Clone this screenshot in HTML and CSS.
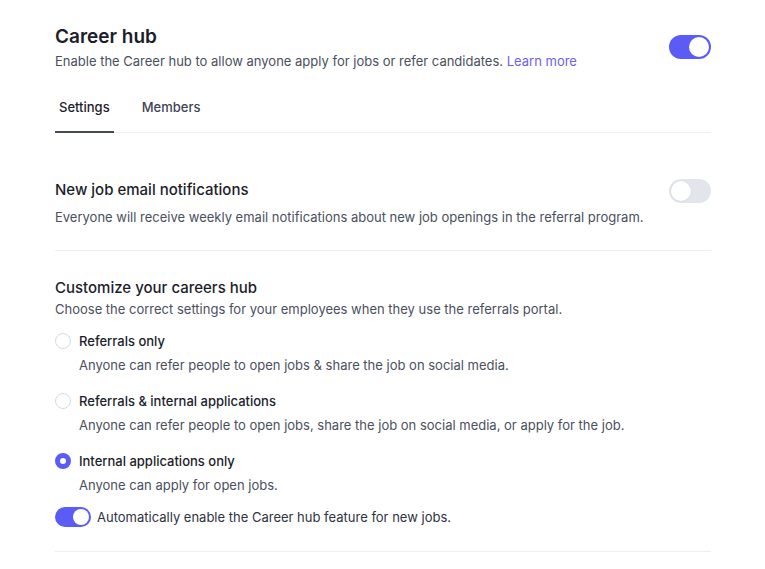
FILE: index.html
```html
<!DOCTYPE html>
<html>
<head>
<meta charset="utf-8">
<link rel="stylesheet" href="styles.css">
</head>
<body>
<div class="page">
  <div class="header">
    <div class="header-text">
      <h1 class="title">Career hub</h1>
      <p class="subtitle">Enable the Career hub to allow anyone apply for jobs or refer candidates. <a class="link" href="#">Learn more</a></p>
    </div>
    <span class="toggle on"><span class="knob"></span></span>
  </div>
  <div class="tabs">
    <span class="tab active">Settings</span>
    <span class="tab">Members</span>
  </div>
  <div class="section section-notify">
    <div class="row">
      <div>
        <h2 class="sec-title">New job email notifications</h2>
        <p class="desc">Everyone will receive weekly email notifications about new job openings in the referral program.</p>
      </div>
      <span class="toggle off"><span class="knob"></span></span>
    </div>
  </div>
  <div class="section section-custom">
    <h2 class="sec-title">Customize your careers hub</h2>
    <p class="desc">Choose the correct settings for your employees when they use the referrals portal.</p>
    <div class="options">
      <div class="option">
        <div class="opt-label"><span class="radio"></span>Referrals only</div>
        <p class="desc opt-desc">Anyone can refer people to open jobs &amp; share the job on social media.</p>
      </div>
      <div class="option">
        <div class="opt-label"><span class="radio"></span>Referrals &amp; internal applications</div>
        <p class="desc opt-desc">Anyone can refer people to open jobs, share the job on social media, or apply for the job.</p>
      </div>
      <div class="option">
        <div class="opt-label"><span class="radio checked"></span>Internal applications only</div>
        <p class="desc opt-desc">Anyone can apply for open jobs.</p>
      </div>
    </div>
    <div class="auto-row">
      <span class="toggle small on"><span class="knob"></span></span>
      <span class="auto-label">Automatically enable the Career hub feature for new jobs.</span>
    </div>
  </div>
</div>
</body>
</html>
```

FILE: styles.css
```css
* { box-sizing: border-box; }
html, body { margin: 0; padding: 0; background: #ffffff; }
body {
  font-family: Inter, "Noto Sans", sans-serif;
  color: #1e2030;
}
.page {
  width: 656px;
  margin-left: 55px;
}
.header {
  display: flex;
  justify-content: space-between;
  align-items: flex-start;
  padding-top: 23px;
}
.title {
  margin: 0;
  font-size: 19px;
  line-height: 28px;
  font-weight: 600;
  color: #1b1d2b;
}
.subtitle {
  margin: 0;
  font-size: 13px;
  line-height: 20px;
  color: #4a4f5e;
}
.link {
  color: #6e5ff2;
  text-decoration: none;
}
.header .toggle { margin-top: 12px; }
.toggle {
  flex: none;
  display: inline-flex;
  align-items: center;
  width: 42px;
  height: 24px;
  border-radius: 12px;
  padding: 2px;
}
.toggle .knob {
  width: 20px;
  height: 20px;
  border-radius: 50%;
  background: #ffffff;
}
.toggle.on { background: #5b5bf5; justify-content: flex-end; }
.toggle.off { background: #e2e5eb; justify-content: flex-start; }
.toggle.off .knob { box-shadow: 0 0 0 0.5px #d5d9e0; }
.toggle.small { width: 36px; height: 20px; border-radius: 10px; }
.toggle.small .knob { width: 16px; height: 16px; }
.tabs {
  display: flex;
  gap: 24px;
  margin-top: 26px;
  border-bottom: 1px solid #eceef2;
}
.tab {
  font-size: 13px;
  line-height: 20px;
  font-weight: 500;
  color: #3f4354;
  padding: 0 4px 14px;
  margin-bottom: -1px;
  border-bottom: 2px solid transparent;
}
.tab.active {
  color: #1b1d2b;
  border-bottom-color: #444857;
}
.section {
  border-bottom: 1px solid #eceef2;
  padding-bottom: 24px;
}
.section-notify { padding-top: 46px; padding-bottom: 23px; }
.section-custom { padding-top: 26px; }
.row {
  display: flex;
  justify-content: space-between;
  align-items: flex-start;
}
.sec-title {
  margin: 0 0 6px;
  font-size: 15px;
  line-height: 22px;
  font-weight: 500;
  color: #1b1d2b;
}
.section-custom > .sec-title { margin-bottom: 0; }
.desc {
  margin: 0;
  font-size: 13px;
  line-height: 20px;
  color: #4a4f5e;
}
.options {
  display: flex;
  flex-direction: column;
  gap: 16px;
  margin-top: 12px;
}
.opt-label {
  display: flex;
  align-items: center;
  gap: 8px;
  font-size: 13px;
  line-height: 20px;
  font-weight: 500;
  color: #1b1d2b;
}
.radio {
  flex: none;
  width: 16px;
  height: 16px;
  border-radius: 50%;
  border: 1px solid #d7dbe2;
  background: #ffffff;
}
.radio.checked {
  border: 5px solid #5b5bf5;
}
.opt-desc {
  margin-top: 4px;
  padding-left: 24px;
}
.auto-row {
  display: flex;
  align-items: center;
  gap: 6px;
  margin-top: 12px;
}
.auto-label {
  font-size: 13px;
  line-height: 20px;
  color: #2f3242;
}
```
